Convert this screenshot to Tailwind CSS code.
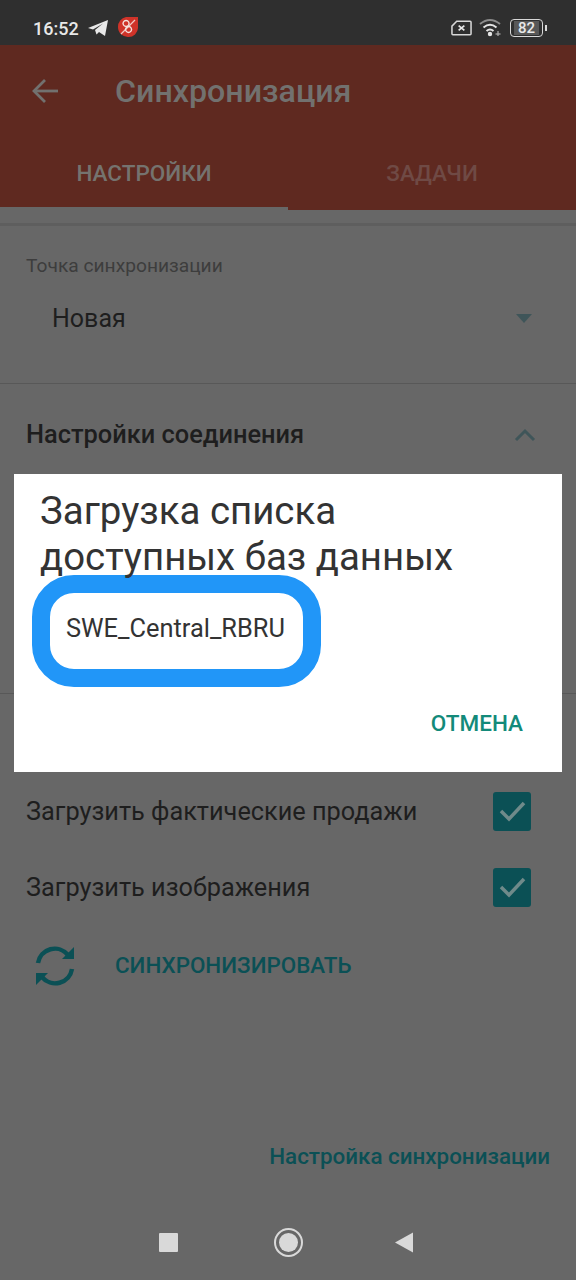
<!DOCTYPE html>
<html lang="ru">
<head>
  <meta charset="UTF-8" />
  <meta name="viewport" content="width=device-width, initial-scale=1.0"/>
  <title>Синхронизация</title>
  <script src="https://cdn.jsdelivr.net/npm/@tailwindcss/browser@4"></script>
</head>
<body class="relative w-[576px] h-[1280px] overflow-hidden bg-[#676767] font-['Roboto',sans-serif]">

  <!-- Status bar -->
  <div class="h-[45px] bg-[#2f2f2f] flex items-center justify-between pt-[11px] pl-[33px] pr-[29px]">
    <div class="flex items-center">
      <span class="text-[18px] font-medium text-[#e8e8e8]">16:52</span>
      <svg class="ml-[9px]" width="20" height="18" viewBox="0 0 20 18"><path d="M0 9 L20 1 L17 17 L11 13 L8.500 15.500 L7 11 L15 4.500 L5 10.500 Z" fill="#e8e8e8"/></svg>
      <svg class="ml-[9px] mt-[-2px]" width="22" height="22" viewBox="0 0 22 22"><path d="M9 1 H21 V12 A9.500 9.500 0 0 1 11.500 21 A10 10 0 0 1 1 11 A10 10 0 0 1 9 1 Z" fill="#cf3329"/><path d="M4 18 L18 4" stroke="#f0c8c2" stroke-width="1.300"/><path d="M9 4.500 A3 3 0 1 0 9.100 4.500 Z M11.500 10.500 A3 3 0 1 0 11.600 10.500 Z" fill="none" stroke="#f6e2de" stroke-width="1.400"/></svg>
    </div>
    <div class="flex items-center">
      <svg width="21" height="16" viewBox="0 0 22 16"><path d="M6 1 H20 A1 1 0 0 1 21 2 V14 A1 1 0 0 1 20 15 H2 A1 1 0 0 1 1 14 V6 Z" fill="none" stroke="#d8d8d8" stroke-width="1.600"/><path d="M8 5.500 L14 10.500 M14 5.500 L8 10.500" stroke="#e8e8e8" stroke-width="1.800"/></svg>
      <svg class="ml-[7px]" width="24" height="20" viewBox="0 0 24 20" fill="none" stroke="#e4e4e4" stroke-width="2"><path d="M1 6 Q11 -2 21 6" stroke="#8c8c8c"/><path d="M4.500 9.500 Q11 4 17.500 9.500"/><path d="M7.500 13 Q11 10 14.500 13"/><circle cx="11" cy="16" r="1.200" fill="#e4e4e4"/><path d="M19 13 V18" stroke-width="1.200" stroke="#b0b0b0"/><path d="M16.500 16 H21.500" stroke-width="1.200" stroke="#b0b0b0"/></svg>
      <div class="ml-[7px] flex items-center">
        <div class="w-[33px] h-[18px] rounded-[4px] border-[1.500px] border-[#d8d8d8] flex items-center justify-center">
          <span class="text-[15px] leading-[14px] font-medium text-[#e8e8e8] bg-[#585858] px-[4px]">82</span>
        </div>
        <div class="ml-[2px] w-[2px] h-[6px] bg-[#d8d8d8]"></div>
      </div>
    </div>
  </div>

  <!-- App bar -->
  <div class="bg-[#5f2920] h-[165px] flex flex-col">
    <div class="h-[92px] flex items-center pl-[32px]">
      <svg width="26" height="26" viewBox="0 0 26 26" fill="none" stroke="#72716f" stroke-width="2.800"><path d="M26 13 H2"/><path d="M13 2 L2 13 L13 24"/></svg>
      <span class="ml-[57px] text-[32.200px] font-medium text-[#72716f] leading-none">Синхронизация</span>
    </div>
    <div class="flex-1 flex">
      <div class="w-[288px] flex flex-col">
        <div class="flex-1 flex items-center justify-center pt-[4px]"><span class="text-[22.500px] font-medium text-[#75736f]">НАСТРОЙКИ</span></div>
        <div class="h-[3px] bg-[#676767]"></div>
      </div>
      <div class="w-[288px] flex items-center justify-center pt-[1px]"><span class="text-[22.500px] font-medium text-[#6f4a45]">ЗАДАЧИ</span></div>
    </div>
  </div>

  <!-- Form -->
  <div class="h-[16px] border-b-[3px] border-[#5e5e5e]"></div>
  <div class="px-[26px] pt-[28px]">
    <div class="text-[19.200px] leading-[24px] text-[#3d3d3d]">Точка синхронизации</div>
    <div class="mt-[25px] flex items-center justify-between pl-[26px]">
      <span class="text-[25px] leading-[32px] text-[#1e1e1e]">Новая</span>
      <svg class="mr-[18px]" width="16" height="10" viewBox="0 0 16 10"><path d="M0 0 H16 L8 9 Z" fill="#3f5559"/></svg>
    </div>
  </div>
  <div class="mt-[48px] h-[1px] bg-[#585858]"></div>
  <div class="px-[26px] flex items-center justify-between h-[101px]">
    <span class="text-[25.400px] font-medium text-[#1e1e1e]">Настройки соединения</span>
    <svg class="mr-[14px]" width="22" height="14" viewBox="0 0 22 14" fill="none" stroke="#3f5559" stroke-width="3"><path d="M2 12 L11 3 L20 12"/></svg>
  </div>
  <div class="mt-[208px] h-[1px] bg-[#585858]"></div>

  <div class="mt-[97px] px-[26px] pr-[45px] flex items-center justify-between h-[40px]">
    <span class="text-[25.300px] pt-[1px] text-[#1e1e1e]">Загрузить фактические продажи</span>
    <div class="w-[38px] h-[39px] rounded-[3px] bg-[#0b5055] flex items-center justify-center">
      <svg width="30" height="24" viewBox="0 0 30 24" fill="none" stroke="#6f8a8a" stroke-width="3.500"><path d="M4 12 L12 20 L27 4"/></svg>
    </div>
  </div>
  <div class="mt-[36px] px-[26px] pr-[45px] flex items-center justify-between h-[40px]">
    <span class="text-[25.300px] pt-[1px] text-[#1e1e1e]">Загрузить изображения</span>
    <div class="w-[38px] h-[39px] rounded-[3px] bg-[#0b5055] flex items-center justify-center">
      <svg width="30" height="24" viewBox="0 0 30 24" fill="none" stroke="#6f8a8a" stroke-width="3.500"><path d="M4 12 L12 20 L27 4"/></svg>
    </div>
  </div>
  <div class="mt-[38px] pl-[34px] flex items-center h-[42px]">
    <svg width="42" height="42" viewBox="0 0 42 42" fill="none" stroke="#0b5055" stroke-width="4.500"><path d="M4 18 A17 17 0 0 1 34 10"/><path d="M38 24 A17 17 0 0 1 8 32"/><path d="M40 2 V14 H28 Z" fill="#0b5055" stroke="none"/><path d="M2 40 V28 H14 Z" fill="#0b5055" stroke="none"/></svg>
    <span class="ml-[39px] text-[22.400px] font-medium text-[#0b5055]">СИНХРОНИЗИРОВАТЬ</span>
  </div>

  <div class="mt-[154px] pr-[26px] text-right text-[22.400px] font-medium text-[#0b5055] leading-[30px]">Настройка синхронизации</div>

  <!-- Nav bar -->
  <div class="mt-[56px] flex items-center pl-[159px] h-[30px]">
    <div class="w-[19px] h-[19px] rounded-[1px] bg-[#d9d9d9]"></div>
    <div class="ml-[96px] w-[29px] h-[29px] rounded-full border-[2px] border-[#d9d9d9] flex items-center justify-center">
      <div class="w-[19px] h-[19px] rounded-full bg-[#d9d9d9]"></div>
    </div>
    <svg class="ml-[92px]" width="19" height="21" viewBox="0 0 19 21"><path d="M0 10.500 L18 0.500 V20.500 Z" fill="#d9d9d9"/></svg>
  </div>

  <!-- Dialog -->
  <div class="absolute left-[14px] top-[474px] w-[548px] h-[298px] bg-white">
    <h2 class="pl-[26px] pt-[14px] text-[38.400px] leading-[46px] text-[#333333] font-normal">Загрузка списка<br>доступных баз данных</h2>
    <div class="ml-[18px] mt-[-5px] w-[289px] h-[112px] rounded-[42px] border-[18px] border-[#2196f8] flex items-center pl-[16px] pb-[6px]">
      <span class="text-[25.400px] text-[#333333]">SWE_Central_RBRU</span>
    </div>
    <div class="mt-[20px] pr-[39px] text-right text-[22.500px] font-medium text-[#138a7a]">ОТМЕНА</div>
  </div>
</body>
</html>
